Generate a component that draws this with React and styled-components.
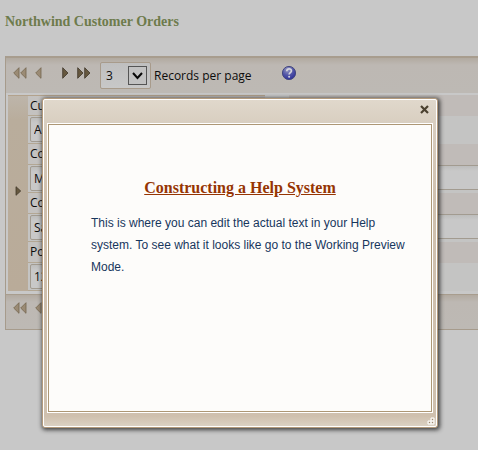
import React from "react";
import styled, { createGlobalStyle } from "styled-components";

const GlobalStyle = createGlobalStyle`
  * { box-sizing: border-box; }
  body {
    margin: 0;
    background: #c8c8c8;
    color: #0c0c0c;
    font-family: "Open Sans", "Noto Sans", sans-serif;
    font-size: 12px;
    overflow: hidden;
  }
`;

const Page = styled.main`
  padding: 12px 0 0 5px;
`;

const PageTitle = styled.h1`
  margin: 0 0 24px;
  font: bold 14px/20px "Liberation Serif", serif;
  color: #6e7b4c;
`;

const Grid = styled.section`
  border-left: 1px solid #a69b8c;
`;

const Pager = styled.nav`
  display: flex;
  align-items: center;
  height: ${(p) => (p.$bottom ? 36 : 37)}px;
  padding: ${(p) => (p.$bottom ? "0 0 8px 7px" : "0 0 0 7px")};
  border-top: ${(p) => (p.$bottom ? 1 : 2)}px solid #a89d8e;
  border-bottom: ${(p) => (p.$bottom ? "1px solid #a69b8c" : "0")};
  background: linear-gradient(#b2aaa0, #bdb8b3 7px, #bdb9b4);
`;

const PagerButton = styled.button`
  display: flex;
  flex: none;
  padding: 0;
  border: 0;
  margin: 0 ${(p) => p.$gap}px ${(p) => (p.$raised ? 6 : 0)}px 0;
  background: none;
`;

const SizePicker = styled.div`
  position: relative;
  flex: none;
  width: 51px;
  height: 27px;
  margin-right: 3px;
`;

const SizeSelect = styled.select`
  width: 100%;
  height: 100%;
  padding: 0 0 0 5px;
  border: 1px solid #a89b8b;
  border-radius: 2px;
  appearance: none;
  background: linear-gradient(#bfbfbf, #c8c8c8);
  color: inherit;
  font: inherit;
`;

const SizeArrow = styled.svg`
  position: absolute;
  top: 4px;
  right: 4px;
  pointer-events: none;
`;

const PagerLabel = styled.label`
  flex: none;
  width: 127px;
`;

const Body = styled.div`
  display: flex;
  padding: 2px 0 3px 2px;
`;

const Record = styled.div`
  display: flex;
  flex: none;
  width: 257px;
  margin-right: 24px;
  border-top: 1px solid #b3a28c;
`;

const Selector = styled.div`
  display: flex;
  align-items: center;
  justify-content: center;
  width: 20px;
  padding-bottom: 6px;
  background: linear-gradient(#bdb5aa, #b9ad9c 24px, #b9ab99);
`;

const Fields = styled.div`
  flex: 1;
`;

const FieldLabel = styled.label`
  display: block;
  height: ${(p) => (p.$first ? 20 : 21)}px;
  padding-left: 2px;
  border-bottom: ${(p) => (p.$plain ? "0" : "1px solid #b3a794")};
  background: ${(p) => (p.$plain ? "#c0bbb8" : "linear-gradient(90deg, #c4c2c0, #c0bbb8)")};
  line-height: 20px;
`;

const FieldCell = styled.div`
  height: 28px;
  padding: ${(p) => (p.$plain ? "0" : "1px 2px 0")};
  border-bottom: ${(p) => (p.$plain ? "0" : "1px solid #b3a794")};
  background: #c4c4c3;
`;

const FieldInput = styled.input`
  display: block;
  width: 100%;
  height: 25px;
  padding: 0 3px;
  border: 1px solid #a29b90;
  border-radius: 2px;
  background: linear-gradient(#bdbdbc, #c8c8c8 5px);
  color: inherit;
  font: inherit;
`;

const SideFields = styled.div`
  flex: 1;
  overflow: hidden;
`;

const WideInput = styled(FieldInput)`
  width: 400px;
`;

const Dialog = styled.section`
  position: fixed;
  top: 98px;
  left: 42px;
  right: 40px;
  border: 1px solid #b39a7c;
  border-radius: 3px;
  box-shadow: 1px 1px 4px 1px rgba(30, 30, 30, 0.8);
  background: #cfc0ae;
`;

const DialogFrame = styled.div`
  border: 1px solid #ffffff;
  border-radius: 2px;
  padding: 0 4px;
  background: linear-gradient(#e0d8cc, #d9cfc1 22px, #cfc0ae 100px, #cfc0ae calc(100% - 10px), #dbd1c3);
`;

const DialogHeader = styled.header`
  display: flex;
  align-items: center;
  justify-content: flex-end;
  height: 24px;
  padding: 0 3px 5px 0;
`;

const CloseButton = styled.button`
  display: flex;
  padding: 0;
  border: 0;
  background: none;
`;

const DialogBody = styled.div`
  min-height: 288px;
  padding: 52px 13px 20px 42px;
  border: 1px solid #ad9775;
  outline: 1px solid #ffffff;
  background: #fdfcfa;
`;

const HelpTitle = styled.h2`
  margin: 0 29px 13px 0;
  color: #963503;
  font: bold 16px/22px "Liberation Serif", serif;
  text-align: center;
  text-decoration: underline;
`;

const HelpText = styled.p`
  margin: 0;
  color: #17365d;
  font: 12px/22px "Liberation Sans", sans-serif;
  padding-right: 4px;
`;

const DialogFooter = styled.footer`
  display: flex;
  align-items: flex-end;
  justify-content: flex-end;
  height: 14px;
  margin-right: -3px;
  padding-bottom: 1px;
`;

function Arrow({ label, left, double, gap, raised }) {
  const w = double ? 14 : 7;
  const shapes = double ? [0, 7] : [0];
  return (
    <PagerButton type="button" aria-label={label} $gap={gap} $raised={raised}>
      <svg width={w} height="12" viewBox={`0 0 ${w} 12`}>
        {shapes.map((x) => (
          <path
            key={x}
            d={left ? `M${x + 6} .7v10.6L${x + 0.7} 6z` : `M${x + 0.7} .7v10.6L${x + 6} 6z`}
            fill={left ? "#9b8b75" : "#66583f"}
            stroke={left ? "#75664f" : "#40372a"}
            strokeWidth=".8"
          />
        ))}
      </svg>
    </PagerButton>
  );
}

const fields = [
  { id: "customer", label: "Customer ID", value: "ALFKI" },
  { id: "contact", label: "Contact Name", value: "Maria Anders", wide: true },
  { id: "title", label: "Contact Title", value: "Sales Representative", wide: true },
  { id: "postal", label: "Postal Code", value: "12209" },
];

export default function App() {
  return (
    <>
      <GlobalStyle />
      <Page>
        <PageTitle>Northwind Customer Orders</PageTitle>
        <Grid>
          <Pager>
            <Arrow label="First page" left double gap={8} raised />
            <Arrow label="Previous page" left gap={20} raised />
            <Arrow label="Next page" gap={8} raised />
            <Arrow label="Last page" double gap={9} raised />
            <SizePicker>
              <SizeSelect id="page-size" defaultValue="3">
                <option>3</option>
                <option>10</option>
              </SizeSelect>
              <SizeArrow width="19" height="19" viewBox="0 0 19 19">
                <rect x=".5" y=".5" width="18" height="18" fill="#c2c2c2" stroke="#555" />
                <path d="M5 7l4.5 5L14 7" fill="none" stroke="#080808" strokeWidth="2" />
              </SizeArrow>
            </SizePicker>
            <PagerLabel htmlFor="page-size">Records per page</PagerLabel>
            <PagerButton type="button" aria-label="Help" $gap={0} $raised>
              <svg width="16" height="16" viewBox="0 0 16 16">
                <defs>
                  <radialGradient id="ball" cx=".4" cy=".25" r=".8">
                    <stop offset="0" stopColor="#999bc2" />
                    <stop offset=".5" stopColor="#5558a8" />
                    <stop offset="1" stopColor="#292c98" />
                  </radialGradient>
                </defs>
                <circle cx="8" cy="8" r="6.6" fill="url(#ball)" stroke="#45497f" />
                <path d="M5.8 6.2c0-3.3 4.8-3 4.6-.2C10.3 7.6 8.2 7.7 8.1 9.5" fill="none" stroke="#d4d4dc" strokeWidth="1.7" />
                <circle cx="8.1" cy="11.8" r="1" fill="#d4d4dc" />
              </svg>
            </PagerButton>
          </Pager>
          <Body>
            <Record>
              <Selector>
                <svg width="7" height="10" viewBox="0 0 7 10">
                  <path d="M1 .7v8.6L5.7 5z" fill="#66583f" stroke="#40372a" strokeWidth=".8" />
                </svg>
              </Selector>
              <Fields>
                {fields.map((f, i) => (
                  <React.Fragment key={f.id}>
                    <FieldLabel htmlFor={f.id} $first={i === 0}>{f.label}</FieldLabel>
                    <FieldCell>
                      <FieldInput id={f.id} defaultValue={f.value} />
                    </FieldCell>
                  </React.Fragment>
                ))}
              </Fields>
            </Record>
            <SideFields>
              {fields.map((f) => (
                <React.Fragment key={f.id}>
                  <FieldLabel as="div" $plain />
                  <FieldCell $plain>
                    {f.wide && <WideInput aria-label={`${f.label} detail`} />}
                  </FieldCell>
                </React.Fragment>
              ))}
            </SideFields>
          </Body>
          <Pager $bottom>
            <Arrow label="First page" left double gap={8} />
            <Arrow label="Previous page" left gap={20} />
            <Arrow label="Next page" gap={8} />
            <Arrow label="Last page" double gap={9} />
          </Pager>
        </Grid>
      </Page>
      <Dialog role="dialog" aria-labelledby="help-title">
        <DialogFrame>
          <DialogHeader>
            <CloseButton type="button" aria-label="Close">
              <svg width="9" height="9" viewBox="0 0 9 9">
                <path d="M1 1l7 7M8 1L1 8" stroke="#4b4130" strokeWidth="2.2" />
              </svg>
            </CloseButton>
          </DialogHeader>
          <DialogBody>
            <HelpTitle id="help-title">Constructing a Help System</HelpTitle>
            <HelpText>
              This is where you can edit the actual text in your Help system. To see what it looks like go to the
              Working Preview Mode.
            </HelpText>
          </DialogBody>
          <DialogFooter>
            <svg width="8" height="8" viewBox="0 0 8 8">
              <path d="M4 1h3v6H1V4h6M4 1v6" fill="none" stroke="#ffffff" />
              <path d="M5 2h1v1H5zM2 5h1v1H2zM5 5h1v1H5z" fill="#9c8a72" />
            </svg>
          </DialogFooter>
        </DialogFrame>
      </Dialog>
    </>
  );
}
